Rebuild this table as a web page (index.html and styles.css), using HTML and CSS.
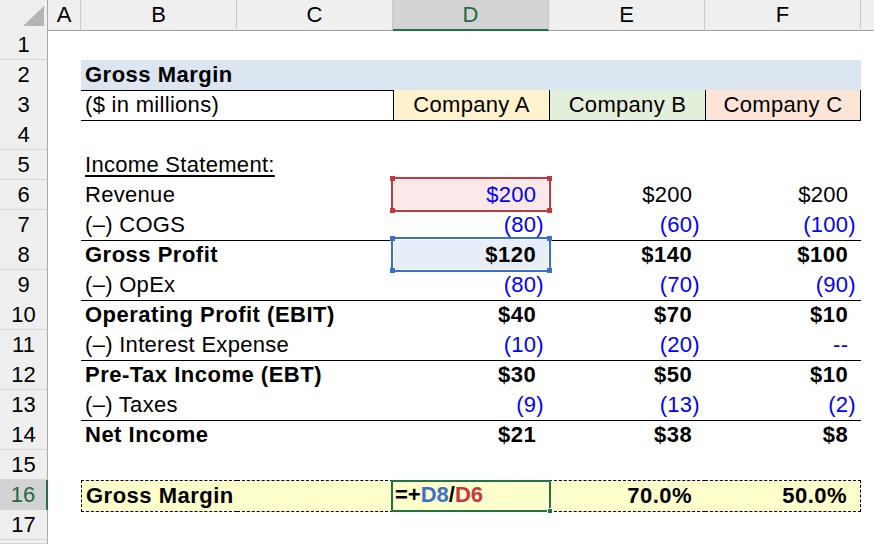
FILE: index.html
```html
<!DOCTYPE html>
<html>
<head>
<meta charset="utf-8">
<link rel="stylesheet" href="styles.css">
</head>
<body>
<div class="sheet">
  <div class="row hdr">
    <div class="corner"><svg width="47" height="29" viewBox="0 0 47 29"><polygon points="23,26 44,26 44,6" fill="#b4b4b4"/></svg></div>
    <div class="ch">A</div>
    <div class="ch">B</div>
    <div class="ch">C</div>
    <div class="ch sel">D</div>
    <div class="ch">E</div>
    <div class="ch">F</div>
    <div class="ch last"></div>
  </div>

  <div class="row"><div class="rh">1</div><div></div><div></div><div></div><div></div><div></div><div></div><div></div></div>

  <div class="row">
    <div class="rh">2</div><div></div>
    <div class="c l b title bb">Gross Margin</div>
    <div class="c title bb"></div><div class="c title bb"></div><div class="c title bb"></div><div class="c title bb"></div>
    <div></div>
  </div>

  <div class="row">
    <div class="rh">3</div><div></div>
    <div class="c l bb">($ in millions)</div>
    <div class="c bb"></div>
    <div class="c ctr bb bl coA">Company A</div>
    <div class="c ctr bb bl coB">Company B</div>
    <div class="c ctr bb bl br coC">Company C</div>
    <div></div>
  </div>

  <div class="row"><div class="rh">4</div><div></div><div></div><div></div><div></div><div></div><div></div><div></div></div>

  <div class="row">
    <div class="rh">5</div><div></div>
    <div class="c l"><span class="ul">Income Statement:</span></div>
    <div></div><div></div><div></div><div></div><div></div>
  </div>

  <div class="row">
    <div class="rh">6</div><div></div>
    <div class="c l">Revenue</div><div></div>
    <div class="c r in"><div class="hl red"><i class="sq tl"></i><i class="sq tr"></i><i class="sq bl2"></i><i class="sq br2"></i></div><span class="txt">$200<span class="pad">)</span></span></div>
    <div class="c r">$200<span class="pad">)</span></div>
    <div class="c r">$200<span class="pad">)</span></div>
    <div></div>
  </div>

  <div class="row">
    <div class="rh">7</div><div></div>
    <div class="c l bb">(–) COGS</div><div class="c bb"></div>
    <div class="c r in bb">(80)</div>
    <div class="c r in bb">(60)</div>
    <div class="c r in bb">(100)</div>
    <div></div>
  </div>

  <div class="row">
    <div class="rh">8</div><div></div>
    <div class="c l b">Gross Profit</div><div></div>
    <div class="c r b"><div class="hl blue"><i class="sq tl"></i><i class="sq tr"></i><i class="sq bl2"></i><i class="sq br2"></i></div><span class="txt">$120<span class="pad">)</span></span></div>
    <div class="c r b">$140<span class="pad">)</span></div>
    <div class="c r b">$100<span class="pad">)</span></div>
    <div></div>
  </div>

  <div class="row">
    <div class="rh">9</div><div></div>
    <div class="c l bb">(–) OpEx</div><div class="c bb"></div>
    <div class="c r in bb">(80)</div>
    <div class="c r in bb">(70)</div>
    <div class="c r in bb">(90)</div>
    <div></div>
  </div>

  <div class="row">
    <div class="rh">10</div><div></div>
    <div class="c l b">Operating Profit (EBIT)</div><div></div>
    <div class="c r b">$40<span class="pad">)</span></div>
    <div class="c r b">$70<span class="pad">)</span></div>
    <div class="c r b">$10<span class="pad">)</span></div>
    <div></div>
  </div>

  <div class="row">
    <div class="rh">11</div><div></div>
    <div class="c l bb">(–) Interest Expense</div><div class="c bb"></div>
    <div class="c r in bb">(10)</div>
    <div class="c r in bb">(20)</div>
    <div class="c r in bb">--<span class="pad">)</span></div>
    <div></div>
  </div>

  <div class="row">
    <div class="rh">12</div><div></div>
    <div class="c l b">Pre-Tax Income (EBT)</div><div></div>
    <div class="c r b">$30<span class="pad">)</span></div>
    <div class="c r b">$50<span class="pad">)</span></div>
    <div class="c r b">$10<span class="pad">)</span></div>
    <div></div>
  </div>

  <div class="row">
    <div class="rh">13</div><div></div>
    <div class="c l bb">(–) Taxes</div><div class="c bb"></div>
    <div class="c r in bb">(9)</div>
    <div class="c r in bb">(13)</div>
    <div class="c r in bb">(2)</div>
    <div></div>
  </div>

  <div class="row">
    <div class="rh">14</div><div></div>
    <div class="c l b">Net Income</div><div></div>
    <div class="c r b">$21<span class="pad">)</span></div>
    <div class="c r b">$38<span class="pad">)</span></div>
    <div class="c r b">$8<span class="pad">)</span></div>
    <div></div>
  </div>

  <div class="row"><div class="rh">15</div><div></div><div></div><div></div><div></div><div></div><div></div><div></div></div>

  <div class="row">
    <div class="rh rsel">16</div><div></div>
    <div class="c l b gm dash dl">Gross Margin</div>
    <div class="c gm dash"></div>
    <div class="c b gm dash edit"><div class="active"><i class="handle"></i></div><span class="txt">=+<span class="ref1">D8</span>/<span class="ref2">D6</span></span></div>
    <div class="c r b gm dash">70.0%<span class="pad">)</span></div>
    <div class="c r b gm dash dr">50.0%<span class="pad">)</span></div>
    <div></div>
  </div>

  <div class="row"><div class="rh">17</div><div></div><div></div><div></div><div></div><div></div><div></div><div></div></div>
  <div class="row short"><div class="rh"></div><div></div><div></div><div></div><div></div><div></div><div></div><div></div></div>
</div>
</body>
</html>
```

FILE: styles.css
```css
* { box-sizing: border-box; }
html, body { margin: 0; padding: 0; background: #fff; }
.sheet {
  width: 874px;
  height: 544px;
  overflow: hidden;
  font-family: "Liberation Sans", Arial, sans-serif;
  font-size: 22px;
  color: #000;
}
.row {
  display: grid;
  grid-template-columns: 48px 33px 156px 156px 156px 156px 156px 13px;
  height: 30px;
}
.row.short { height: 4px; }
.hdr { background: #efefef; }
.corner {
  border-right: 1px solid #a8a8a8;
  border-bottom: 1px solid #a0a0a0;
  background: #efefef;
}
.corner svg { display: block; }
.ch {
  background: #efefef;
  border-right: 1px solid #c8c8c8;
  border-bottom: 1px solid #a0a0a0;
  text-align: center;
  line-height: 29px;
}
.ch.last { border-right: none; }
.ch.sel {
  background: #d3d3d3;
  color: #1d6b40;
  border-bottom: 2px solid #217346;
}
.rh {
  background: #efefef;
  border-right: 1px solid #a8a8a8;
  border-bottom: 1px solid #d4d4d4;
  text-align: center;
  line-height: 29px;
}
.rh.rsel {
  background: #d3d3d3;
  color: #1d6b40;
  border-right: 2px solid #217346;
}
.c {
  position: relative;
  line-height: 30px;
  white-space: nowrap;
  letter-spacing: 0.3px;
}
.l { padding-left: 4px; }
.r { text-align: right; padding-right: 5px; }
.ctr { text-align: center; }
.b { font-weight: bold; letter-spacing: 0.5px; }
.in { color: #0000ff; }
.pad { visibility: hidden; }
.title { background: #dce6f1; }
.bb { border-bottom: 1px solid #000; }
.bl { border-left: 1px solid #000; }
.br { border-right: 1px solid #000; }
.coA { background: #fff2cc; }
.coB { background: #e2efda; }
.coC { background: #fce4d6; }
.ul {
  text-decoration: underline;
  text-decoration-thickness: 2px;
  text-underline-offset: 3px;
}
.txt { position: relative; z-index: 1; }
.hl {
  position: absolute;
  top: -3px; bottom: -2px; left: -2px; right: -2px;
  border: 2px solid;
  box-shadow: inset 0 0 0 1px #fff;
  z-index: 0;
}
.hl.red { border-color: #c4383e; background: #fbe9ea; }
.hl.blue { border-color: #3a70c7; background: #e8eef8; }
.sq {
  position: absolute;
  width: 5px; height: 5px;
}
.hl.red .sq { background: #c4383e; }
.hl.blue .sq { background: #3a70c7; }
.sq.tl { left: -3px; top: -3px; }
.sq.tr { right: -3px; top: -3px; }
.sq.bl2 { left: -3px; bottom: -3px; }
.sq.br2 { right: -3px; bottom: -3px; }
.gm { background: #ffffcc; }
.dash { border-top: 1px dashed #000; border-bottom: 1px dashed #000; }
.dl { border-left: 1px dashed #000; }
.dr { border-right: 1px dashed #000; }
.edit { padding-left: 2px; line-height: 28px; letter-spacing: 0; }
.active {
  position: absolute;
  top: -1px; bottom: -1px; left: -2px; right: -2px;
  border: 2px solid #217346;
  z-index: 2;
}
.handle {
  position: absolute;
  right: -4px; bottom: -4px;
  width: 6px; height: 6px;
  background: #217346;
  border: 1px solid #fff;
}
.ref1 { color: #3a70c7; }
.ref2 { color: #c4383e; }
```
